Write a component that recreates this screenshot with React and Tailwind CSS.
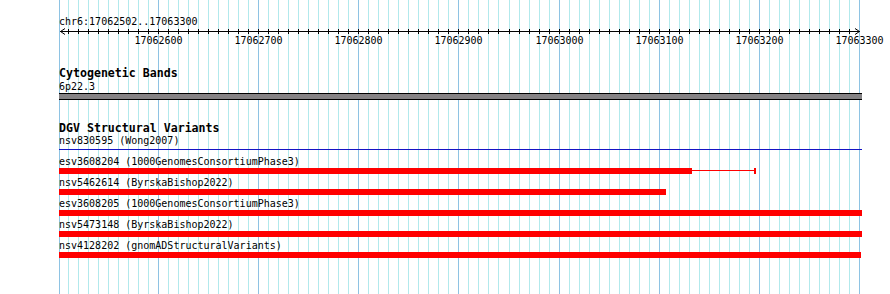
import React from "react";

const px = (bp) => Math.round(158 + ((bp - 17062600) * 701) / 700);

const minor = [];
for (let bp = 17062510; bp < 17063300; bp += 10) {
  if (bp % 100 !== 0) minor.push(px(bp));
}
const major = [];
for (let bp = 17062600; bp <= 17063300; bp += 100) major.push({ bp, x: px(bp) });
const ticks = [];
for (let bp = 17062510; bp <= 17063290; bp += 10) ticks.push(px(bp));

function Grid() {
  return (
    <svg
      className="absolute left-0 top-0"
      width="890"
      height="294"
      shapeRendering="crispEdges"
    >
      {minor.map((x) => (
        <line key={x} x1={x + 0.5} x2={x + 0.5} y1="0" y2="294" stroke="#b2e9ec" strokeWidth="1" />
      ))}
      {[59, ...major.map((m) => m.x)].map((x) => (
        <line key={"M" + x} x1={x + 0.5} x2={x + 0.5} y1="0" y2="294" stroke="#8ec3e3" strokeWidth="1" />
      ))}
    </svg>
  );
}

function Ruler() {
  return (
    <svg
      className="block"
      width="831"
      height="20"
      viewBox="59 0 831 20"
      shapeRendering="crispEdges"
    >
      <line x1="60" x2="860" y1="3.5" y2="3.5" stroke="#000" strokeWidth="1" />
      {ticks.map((x) => (
        <line key={x} x1={x + 0.5} x2={x + 0.5} y1="1" y2="6" stroke="#000" strokeWidth="1" />
      ))}
      <polyline points="65,0.5 60.5,3.5 65,6.5" fill="none" stroke="#000" strokeWidth="1" shapeRendering="auto" />
      <polyline points="855,0.5 859.5,3.5 855,6.5" fill="none" stroke="#000" strokeWidth="1" shapeRendering="auto" />
      {major.map((m) => (
        <text
          key={m.bp}
          x={m.x + 0.5}
          y="16"
          textAnchor="middle"
          fontFamily="'DejaVu Sans Mono', monospace"
          fontSize="10"
          fill="#000"
        >
          {m.bp}
        </text>
      ))}
    </svg>
  );
}

function Row({ label, children }) {
  return (
    <div className="mb-[2px]">
      <div className="h-[13px] whitespace-pre">{label}</div>
      <div className="flex h-[6px]">{children}</div>
    </div>
  );
}

export default function App() {
  return (
    <div className="relative w-[890px] h-[294px] overflow-hidden bg-white text-black font-['DejaVu_Sans_Mono',monospace] text-[10px] leading-[13px]">
      <Grid />
      <div className="relative flex flex-col pl-[59px] pt-[15px]">
        <div className="h-[13px]">chr6:17062502..17063300</div>
        <Ruler />
        <div className="mt-[18px] h-[14px] leading-[14px] text-[11.6px] font-bold">Cytogenetic Bands</div>
        <div className="h-[13px]">6p22.3</div>
        <div className="h-[7px] w-[803px] border-y border-black bg-[#858385]" />
        <div className="mt-[21px] h-[13px] leading-[14px] text-[11.6px] font-bold">DGV Structural Variants</div>
        <div className="h-[13px] whitespace-pre">nsv830595 (Wong2007)</div>
        <div className="mt-[2px] h-px w-[803px] bg-[#1414c4]" />
        <div className="mt-[5px] flex flex-col">
          <Row label="esv3608204 (1000GenomesConsortiumPhase3)">
            <div className="h-[6px] w-[633px] bg-[#ff0000]" />
            <div className="flex h-[6px] w-[62px] flex-col pt-[2px]">
              <div className="h-px w-full bg-[#ff0000]" />
            </div>
            <div className="h-[6px] w-[2px] bg-[#ff0000]" />
          </Row>
          <Row label="nsv5462614 (ByrskaBishop2022)">
            <div className="h-[6px] w-[607px] bg-[#ff0000]" />
          </Row>
          <Row label="esv3608205 (1000GenomesConsortiumPhase3)">
            <div className="h-[6px] w-[803px] bg-[#ff0000]" />
          </Row>
          <Row label="nsv5473148 (ByrskaBishop2022)">
            <div className="h-[6px] w-[803px] bg-[#ff0000]" />
          </Row>
          <Row label="nsv4128202 (gnomADStructuralVariants)">
            <div className="h-[6px] w-[802px] bg-[#ff0000]" />
          </Row>
        </div>
      </div>
    </div>
  );
}
